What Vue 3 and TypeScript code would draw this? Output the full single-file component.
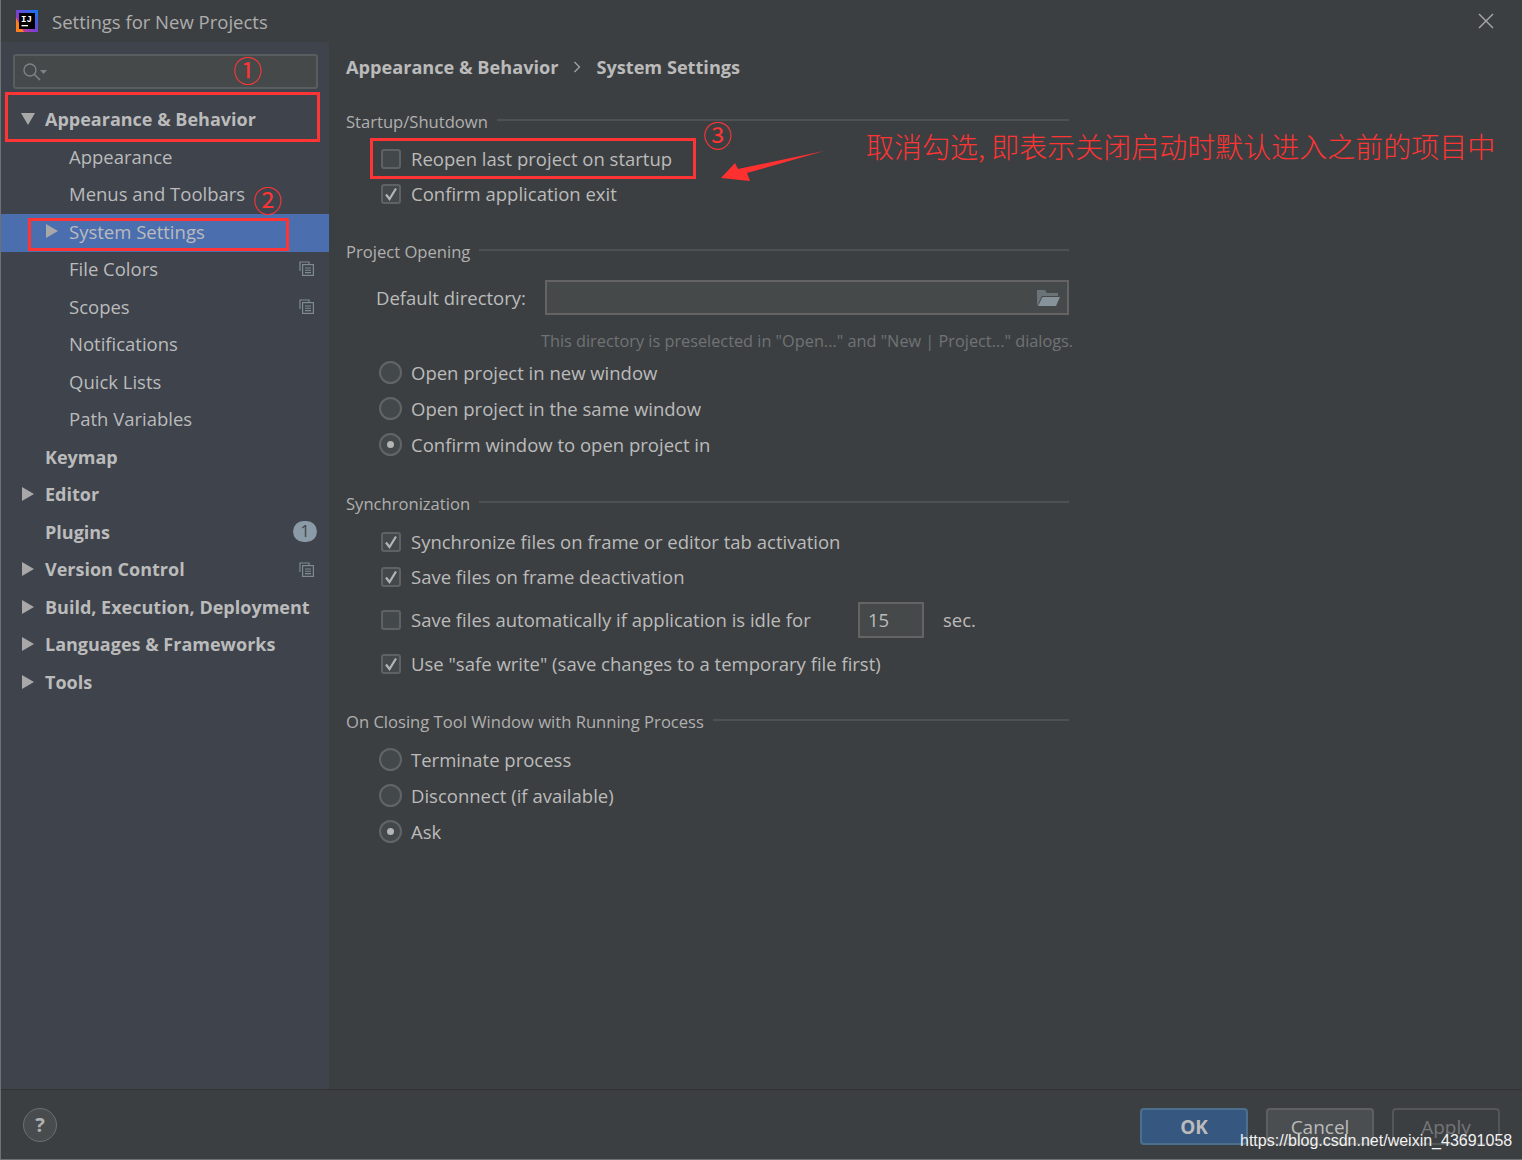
<script setup lang="ts">
// Settings dialog with the red tutorial annotations on top
interface NavItem {
  label: string;
  level: number;
  arrow?: 'open' | 'closed';
  project?: boolean;
  badge?: string;
  selected?: boolean;
}

const navItems: NavItem[] = [
  { label: 'Appearance & Behavior', level: 0, arrow: 'open' },
  { label: 'Appearance', level: 1 },
  { label: 'Menus and Toolbars', level: 1 },
  { label: 'System Settings', level: 1, arrow: 'closed', selected: true },
  { label: 'File Colors', level: 1, project: true },
  { label: 'Scopes', level: 1, project: true },
  { label: 'Notifications', level: 1 },
  { label: 'Quick Lists', level: 1 },
  { label: 'Path Variables', level: 1 },
  { label: 'Keymap', level: 0 },
  { label: 'Editor', level: 0, arrow: 'closed' },
  { label: 'Plugins', level: 0, badge: '1' },
  { label: 'Version Control', level: 0, arrow: 'closed', project: true },
  { label: 'Build, Execution, Deployment', level: 0, arrow: 'closed' },
  { label: 'Languages & Frameworks', level: 0, arrow: 'closed' },
  { label: 'Tools', level: 0, arrow: 'closed' },
];

const openingRadios = [
  { label: 'Open project in new window', on: false },
  { label: 'Open project in the same window', on: false },
  { label: 'Confirm window to open project in', on: true },
];

const closingRadios = [
  { label: 'Terminate process', on: false },
  { label: 'Disconnect (if available)', on: false },
  { label: 'Ask', on: true },
];
</script>

<template>
  <div class="dialog">
    <header class="titlebar">
      <svg class="logo" width="22" height="22" viewBox="0 0 22 22">
        <defs>
          <linearGradient id="ij" x1="0" y1="1" x2="1" y2="0">
            <stop offset="0" stop-color="#f5317f" />
            <stop offset="0.45" stop-color="#7b3fd0" />
            <stop offset="1" stop-color="#087cfa" />
          </linearGradient>
        </defs>
        <rect width="22" height="22" fill="url(#ij)" />
        <polygon points="0,8 0,22 8,22" fill="#fc801d" />
        <rect x="3" y="3" width="16" height="16" fill="#000" />
        <text x="5" y="11.5" class="logo-text">IJ</text>
        <rect x="5.5" y="15" width="6.5" height="1.3" fill="#fff" />
      </svg>
      <span class="title">Settings for New Projects</span>
      <svg class="close" width="16" height="16" viewBox="0 0 16 16">
        <path d="M1 1 L15 15 M15 1 L1 15" stroke="#a9a9a9" stroke-width="1.4" fill="none" />
      </svg>
    </header>

    <div class="body">
      <aside class="sidebar">
        <div class="search">
          <svg width="26" height="20" viewBox="0 0 26 20">
            <circle cx="8" cy="8" r="6" stroke="#7d8285" stroke-width="1.4" fill="none" />
            <path d="M12.5 12.5 L18 18" stroke="#7d8285" stroke-width="1.6" />
            <polygon points="18,8 25,8 21.5,12" fill="#7d8285" />
          </svg>
        </div>
        <nav class="tree">
          <div
            v-for="item in navItems"
            :key="item.label"
            class="node"
            :class="[`level-${item.level}`, { selected: item.selected }]"
          >
            <svg v-if="item.arrow" class="arrow" width="14" height="14" viewBox="0 0 14 14">
              <polygon v-if="item.arrow === 'open'" points="0,1 14,1 7,13" fill="#a8a8a8" />
              <polygon v-else points="1,0 13,7 1,14" fill="#a8a8a8" />
            </svg>
            <span class="node-label">{{ item.label }}</span>
            <svg v-if="item.project" class="project" width="15" height="15" viewBox="0 0 15 15">
              <path d="M1 10 V1 H10 V3" stroke="#7f8b91" stroke-width="1.2" fill="none" />
              <rect x="3.6" y="3.6" width="10.8" height="10.8" stroke="#7f8b91" stroke-width="1.2" fill="none" />
              <path d="M6 7 H12 M6 9.3 H12 M6 11.6 H12" stroke="#7f8b91" stroke-width="1.1" />
            </svg>
            <span v-if="item.badge" class="badge">{{ item.badge }}</span>
          </div>
        </nav>
      </aside>

      <main class="pane">
        <div class="crumbs">
          <span>Appearance &amp; Behavior</span>
          <svg width="8" height="12" viewBox="0 0 8 12">
            <path d="M1.5 1 L6.5 6 L1.5 11" stroke="#a8a8a8" stroke-width="1.2" fill="none" />
          </svg>
          <span>System Settings</span>
        </div>

        <section class="group first">
          <div class="group-title"><span>Startup/Shutdown</span><i></i></div>
          <div class="row">
            <span class="ctl"><span class="check"></span></span>
            <span>Reopen last project on startup</span>
          </div>
          <div class="row">
            <span class="ctl">
              <span class="check">
                <svg width="14" height="14" viewBox="0 0 14 14"><path d="M2 7.5 L5.5 12 L12 1.5" stroke="#b4b4b4" stroke-width="2.2" fill="none" /></svg>
              </span>
            </span>
            <span>Confirm application exit</span>
          </div>
        </section>

        <section class="group opening">
          <div class="group-title"><span>Project Opening</span><i></i></div>
          <div class="dir-row">
            <label>Default directory:</label>
            <div class="dir-input">
              <svg width="24" height="18" viewBox="0 0 24 18">
                <path d="M1 17 V1 H9 L11 4 H22 V7 H6 Z" fill="#6a7378" />
                <polygon points="6.5,8 24,8 20,17 2,17" fill="#87939a" />
              </svg>
            </div>
          </div>
          <div class="hint">This directory is preselected in "Open..." and "New | Project..." dialogs.</div>
          <div v-for="r in openingRadios" :key="r.label" class="row radio-row">
            <span class="ctl"><span class="radio" :class="{ on: r.on }"></span></span>
            <span>{{ r.label }}</span>
          </div>
        </section>

        <section class="group sync">
          <div class="group-title"><span>Synchronization</span><i></i></div>
          <div class="row">
            <span class="ctl">
              <span class="check">
                <svg width="14" height="14" viewBox="0 0 14 14"><path d="M2 7.5 L5.5 12 L12 1.5" stroke="#b4b4b4" stroke-width="2.2" fill="none" /></svg>
              </span>
            </span>
            <span>Synchronize files on frame or editor tab activation</span>
          </div>
          <div class="row">
            <span class="ctl">
              <span class="check">
                <svg width="14" height="14" viewBox="0 0 14 14"><path d="M2 7.5 L5.5 12 L12 1.5" stroke="#b4b4b4" stroke-width="2.2" fill="none" /></svg>
              </span>
            </span>
            <span>Save files on frame deactivation</span>
          </div>
          <div class="row idle-row">
            <span class="ctl"><span class="check"></span></span>
            <span class="idle-label">Save files automatically if application is idle for</span>
            <span class="num-input">15</span>
            <span class="sec">sec.</span>
          </div>
          <div class="row safe-row">
            <span class="ctl">
              <span class="check">
                <svg width="14" height="14" viewBox="0 0 14 14"><path d="M2 7.5 L5.5 12 L12 1.5" stroke="#b4b4b4" stroke-width="2.2" fill="none" /></svg>
              </span>
            </span>
            <span>Use "safe write" (save changes to a temporary file first)</span>
          </div>
        </section>

        <section class="group closing">
          <div class="group-title"><span>On Closing Tool Window with Running Process</span><i></i></div>
          <div v-for="r in closingRadios" :key="r.label" class="row radio-row">
            <span class="ctl"><span class="radio" :class="{ on: r.on }"></span></span>
            <span>{{ r.label }}</span>
          </div>
        </section>
      </main>
    </div>

    <footer class="footer">
      <span class="help">?</span>
      <div class="buttons">
        <button class="btn primary">OK</button>
        <button class="btn">Cancel</button>
        <button class="btn disabled">Apply</button>
      </div>
    </footer>

    <!-- tutorial markup drawn over the screenshot -->
    <div class="mark box-a"></div>
    <div class="mark box-b"></div>
    <div class="mark box-c"></div>
    <span class="num num-1">①</span>
    <span class="num num-2">②</span>
    <span class="num num-3">③</span>
    <svg class="pointer" width="104" height="32" viewBox="0 0 104 32">
      <polygon points="0,27 14,12 17,18 103,0 26,22 29,30" fill="#ff3030" />
    </svg>
    <div class="note">取消勾选, 即表示关闭启动时默认进入之前的项目中</div>
    <div class="watermark">https://blog.csdn.net/weixin_43691058</div>
  </div>
</template>

<style scoped>
.dialog {
  position: relative;
  width: 1522px;
  height: 1160px;
  box-sizing: border-box;
  display: flex;
  flex-direction: column;
  overflow: hidden;
  background: #3c3f41;
  border-left: 1px solid #6f7173;
  border-bottom: 1px solid #6f7173;
  color: #bbbbbb;
  font-family: "Open Sans", "Noto Sans", sans-serif;
  font-size: 18.5px;
}

.titlebar {
  height: 42px;
  flex: none;
  display: flex;
  align-items: center;
  padding: 0 28px 0 15px;
}

.logo-text {
  font-family: "Liberation Mono", monospace;
  font-size: 9px;
  font-weight: 700;
  fill: #fff;
}

.title {
  margin-left: 14px;
  font-size: 18.5px;
  color: #adadad;
}

.close {
  margin-left: auto;
}

.body {
  flex: 1;
  display: flex;
  min-height: 0;
}

.sidebar {
  width: 328px;
  flex: none;
  background: #3e434c;
  padding-top: 12px;
  box-sizing: border-box;
}

.search {
  height: 35px;
  margin: 0 11px 0 12px;
  box-sizing: border-box;
  border: 2px solid #5a5d5f;
  border-radius: 3px;
  background: #45494a;
  display: flex;
  align-items: center;
  padding-left: 7px;
}

.tree {
  margin-top: 11.5px;
}

.node {
  height: 37.5px;
  box-sizing: border-box;
  display: flex;
  align-items: center;
  position: relative;
  padding-right: 15px;
}

.node.level-0 {
  padding-left: 44px;
  font-weight: 700;
  font-size: 18px;
}

.node.level-1 {
  padding-left: 68px;
  padding-bottom: 0.6px;
}

.node.selected {
  background: #4b6eaf;
  top: 1px;
  padding-bottom: 2.6px;
}

.arrow {
  position: absolute;
  left: 20px;
}

.level-1 .arrow {
  left: 44px;
}

.project {
  margin-left: auto;
}

.badge {
  margin-left: auto;
  margin-right: -3px;
  width: 24px;
  height: 21px;
  border-radius: 11px;
  background: #8a9aa6;
  color: #3e434c;
  font-size: 16px;
  font-weight: 400;
  line-height: 21px;
  text-align: center;
}

.pane {
  flex: 1;
  padding-left: 17px;
  min-width: 0;
}

.crumbs {
  height: 24px;
  margin-top: 13px;
  display: flex;
  align-items: center;
  gap: 15px;
  font-weight: 700;
  font-size: 18.15px;
}

.group {
  width: 723px;
}

.group.first {
  margin-top: 30px;
}

.group.opening {
  margin-top: 28px;
}

.group.sync {
  margin-top: 29px;
}

.group.closing {
  margin-top: 28px;
}

.group-title {
  height: 24px;
  display: flex;
  align-items: center;
  gap: 9px;
  font-size: 16.6px;
  color: #b0b0b0;
}

.group-title span {
  white-space: nowrap;
}

.group-title i {
  flex: 1;
  height: 2px;
  background: #4f5254;
  position: relative;
  top: -1px;
}

.group.first .group-title {
  margin-bottom: 8px;
}

.row {
  height: 35px;
  display: flex;
  align-items: center;
  padding-left: 33px;
  white-space: nowrap;
}

.radio-row {
  height: 36px;
}

.radio-row .ctl {
  position: relative;
  left: -1px;
}

.closing .group-title {
  margin-bottom: 8px;
}

.sync .group-title {
  margin-bottom: 9px;
}

.idle-row {
  height: 36px;
  margin-top: 8px;
}

.safe-row {
  margin-top: 8px;
}

.ctl {
  width: 24px;
  height: 24px;
  margin-right: 8px;
  display: flex;
  align-items: center;
  justify-content: center;
  flex: none;
}

.check {
  width: 20px;
  height: 20px;
  box-sizing: border-box;
  border: 2px solid #5f6264;
  border-radius: 3px;
  background: #43494a;
  display: flex;
  align-items: center;
  justify-content: center;
}

.radio {
  width: 23px;
  height: 23px;
  box-sizing: border-box;
  border: 2px solid #626567;
  border-radius: 50%;
  background: #43494a;
  display: flex;
  align-items: center;
  justify-content: center;
}

.radio.on::after {
  content: "";
  width: 7px;
  height: 7px;
  border-radius: 50%;
  background: #b4b4b4;
}

.dir-row {
  height: 35px;
  margin-top: 17px;
  display: flex;
  align-items: center;
  padding-left: 30px;
}

.dir-row label {
  width: 169px;
  white-space: nowrap;
}

.dir-input {
  flex: 1;
  height: 35px;
  box-sizing: border-box;
  border: 2px solid #646464;
  background: #45494a;
  display: flex;
  align-items: center;
  justify-content: flex-end;
  padding-right: 7px;
}

.hint {
  margin: 14px 0 1px 195px;
  height: 24px;
  line-height: 24px;
  font-size: 16.3px;
  color: #6f7375;
  white-space: nowrap;
}

.idle-label {
  width: 447px;
  padding-bottom: 2px;
}

.num-input {
  width: 66px;
  height: 36px;
  box-sizing: border-box;
  border: 2px solid #646464;
  background: #45494a;
  line-height: 31px;
  padding-left: 8px;
}

.sec {
  margin-left: 19px;
  padding-bottom: 2px;
}

.footer {
  height: 70px;
  flex: none;
  box-sizing: border-box;
  border-top: 1px solid #323232;
  display: flex;
  align-items: flex-start;
  padding: 18px 22px 0 22px;
}

.help {
  width: 34px;
  height: 34px;
  box-sizing: border-box;
  border: 1px solid #6c6f71;
  border-radius: 50%;
  background: #484c4e;
  text-align: center;
  line-height: 31px;
  font-size: 20px;
  font-weight: 700;
  color: #b0b0b0;
}

.buttons {
  margin-left: auto;
  display: flex;
  gap: 18px;
}

.btn {
  width: 108px;
  height: 37px;
  box-sizing: border-box;
  border: 2px solid #5e6060;
  border-radius: 4px;
  background: #4a4e50;
  color: #bbbbbb;
  font-family: inherit;
  font-size: 19px;
  padding: 0;
}

.btn.primary {
  background: #365880;
  border-color: #4c708c;
  font-weight: 700;
}

.btn.disabled {
  background: #3c3f41;
  border-color: #545658;
  color: #747678;
}

.mark {
  position: absolute;
  box-sizing: border-box;
  border: 3px solid #ff3434;
}

.box-a {
  left: 4px;
  top: 92px;
  width: 315px;
  height: 50px;
}

.box-b {
  left: 27px;
  top: 218px;
  width: 261px;
  height: 33px;
}

.box-c {
  left: 369px;
  top: 138px;
  width: 326px;
  height: 41px;
}

.num {
  position: absolute;
  color: #ff3434;
  font-family: "Noto Sans CJK SC", sans-serif;
  font-size: 29px;
  line-height: 30px;
}

.num-1 {
  left: 232px;
  top: 54px;
}

.num-2 {
  left: 252px;
  top: 184px;
}

.num-3 {
  left: 702px;
  top: 119px;
}

.pointer {
  position: absolute;
  left: 720px;
  top: 151px;
}

.note {
  position: absolute;
  left: 865px;
  top: 127px;
  color: #ff3434;
  font-family: "Noto Sans CJK SC", sans-serif;
  font-size: 28px;
  font-weight: 300;
  line-height: 38px;
  white-space: nowrap;
}

.watermark {
  position: absolute;
  left: 1239px;
  top: 1131px;
  font-family: "Liberation Sans", sans-serif;
  font-size: 16px;
  line-height: 20px;
  color: #f2f2f2;
  white-space: nowrap;
}
</style>

<style>
body {
  background: #3c3f41;
}
</style>
